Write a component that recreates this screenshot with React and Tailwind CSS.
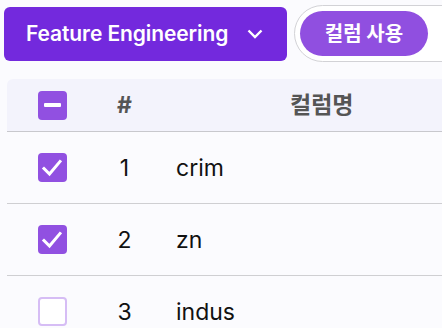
import React, { useState } from "react";

const rows = [
    { id: 1, name: "crim", checked: true },
    { id: 2, name: "zn", checked: true },
    { id: 3, name: "indus", checked: false },
];

const Checkbox = ({ state }) => {
    if (state === "none") {
        return <div className="w-[29px] h-[29px] rounded-[4px] border-2 border-[#d6bdf5] bg-white" />;
    }
    return (
        <div className="w-[29px] h-[29px] rounded-[4px] bg-[#9150e1] flex items-center justify-center">
            {state === "some" ? (
                <div className="w-[17px] h-[4px] bg-white rounded-[1px]" />
            ) : (
                <svg width="29" height="29" viewBox="0 0 29 29" fill="none">
                    <path d="M6 15.5 L11.5 21 L22 8.5" stroke="white" strokeWidth="3" strokeLinecap="square" />
                </svg>
            )}
        </div>
    );
};

const App = () => {
    const [items] = useState(rows);

    return (
        <div
            className="w-[442px] h-[328px] overflow-hidden bg-[#fbfbfe]"
            style={{ fontFamily: "Inter, 'Noto Sans CJK KR', sans-serif" }}
        >
            {/* toolbar */}
            <div className="flex items-center pt-[5px] pl-[4px] gap-[7px] w-[600px]">
                <button className="w-[283px] h-[54px] shrink-0 rounded-[6px] bg-[#7329dd] flex items-center pl-[22px] text-white whitespace-nowrap">
                    <span className="text-[21px] font-semibold tracking-[-0.1px]">Feature Engineering</span>
                    <svg className="ml-[19px]" width="16" height="10" viewBox="0 0 16 10" fill="none">
                        <path d="M1.5 1.5 L8 8 L14.5 1.5" stroke="white" strokeWidth="2.4" />
                    </svg>
                </button>
                <div className="h-[57px] w-[240px] shrink-0 rounded-full border border-[#d2d2d6] bg-white flex items-center pl-[5px]">
                    <div className="h-[45px] w-[128px] rounded-full bg-[#904fe0] flex items-center justify-center text-white text-[20px] font-bold whitespace-nowrap">
                        컬럼 사용
                    </div>
                </div>
            </div>

            {/* table */}
            <div className="ml-[7px] mt-[17px] w-[560px]">
                <div className="h-[53px] flex items-center bg-[#f3f3fc] rounded-tl-[6px] border-b border-[#c8c8cd] text-[#555555] font-bold text-[23px]">
                    <div className="w-[91px] flex justify-center">
                        <Checkbox state="some" />
                    </div>
                    <div className="w-[53px] text-center">#</div>
                    <div className="pl-[139px]">컬럼명</div>
                </div>
                {items.map((r) => (
                    <div key={r.id} className="h-[72px] flex items-center border-b border-[#cfcfd2] text-[23px] text-[#111111]">
                        <div className="w-[91px] flex justify-center">
                            <Checkbox state={r.checked ? "all" : "none"} />
                        </div>
                        <div className="w-[53px] text-center pt-[2px]">{r.id}</div>
                        <div className="pl-[25px] pt-[2px]">{r.name}</div>
                    </div>
                ))}
            </div>
        </div>
    );
};

export default App;
